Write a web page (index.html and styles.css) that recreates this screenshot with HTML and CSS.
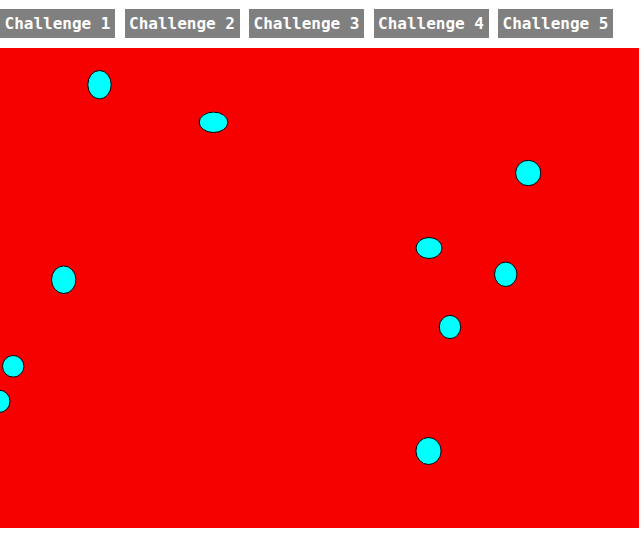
FILE: index.html
```html
<!DOCTYPE html>
<html>
<head>
<meta charset="utf-8">
<link rel="stylesheet" href="styles.css">
</head>
<body>
<div class="toolbar">
  <button class="challenge">Challenge 1</button>
  <button class="challenge">Challenge 2</button>
  <button class="challenge">Challenge 3</button>
  <button class="challenge">Challenge 4</button>
  <button class="challenge">Challenge 5</button>
</div>
<svg class="stage" width="639" height="480" viewBox="0 0 639 480">
  <rect x="0" y="0" width="639" height="480" fill="#f70000"/>
  <g fill="#00ffff" stroke="#000" stroke-width="1">
    <ellipse cx="99.5" cy="36.7" rx="11.7" ry="14.2"/>
    <ellipse cx="213.5" cy="74.3" rx="14.3" ry="10.2"/>
    <ellipse cx="528.2" cy="125" rx="12.6" ry="12.7"/>
    <ellipse cx="429" cy="200" rx="13" ry="10.5"/>
    <ellipse cx="505.7" cy="226.3" rx="11.2" ry="12.2"/>
    <ellipse cx="450" cy="279" rx="10.7" ry="11.6"/>
    <ellipse cx="63.7" cy="231.7" rx="12.2" ry="13.8"/>
    <ellipse cx="13.2" cy="318.3" rx="10.7" ry="10.8"/>
    <ellipse cx="-1" cy="353.3" rx="11" ry="11.2"/>
    <ellipse cx="428.5" cy="403" rx="12.6" ry="13.5"/>
  </g>
</svg>
</body>
</html>
```

FILE: styles.css
```css
html, body {
  margin: 0;
  padding: 0;
  background: #ffffff;
}

.toolbar {
  display: flex;
  gap: 9.5px;
  padding-top: 9px;
  height: 29px;
  margin-bottom: 10px;
}

.challenge {
  width: 115px;
  height: 29px;
  margin: 0;
  padding: 0;
  border: none;
  background: #808080;
  color: #ffffff;
  font-family: "DejaVu Sans Mono", "Liberation Mono", monospace;
  font-size: 16px;
  font-weight: bold;
  line-height: 29px;
  text-align: center;
}

.stage {
  display: block;
}
```
